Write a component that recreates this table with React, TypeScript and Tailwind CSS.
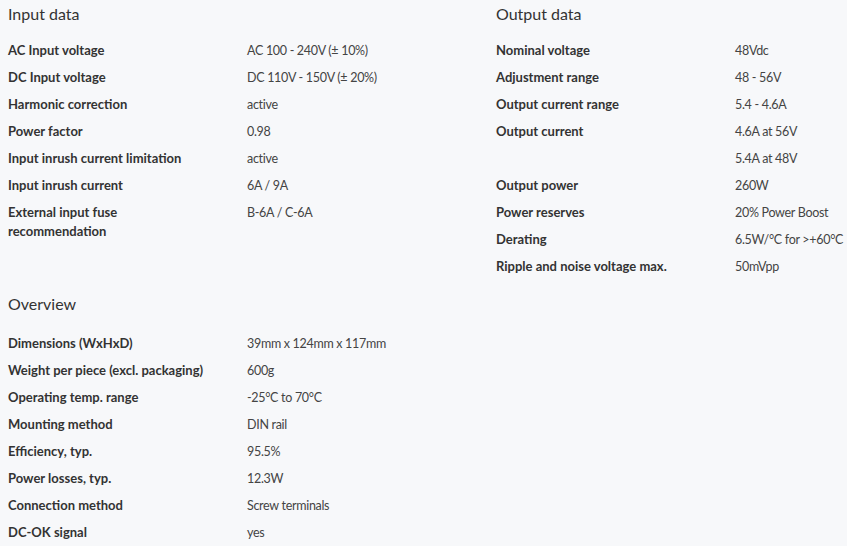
const INPUT_DATA = [
  { label: 'AC Input voltage', value: 'AC 100 - 240V (± 10%)' },
  { label: 'DC Input voltage', value: 'DC 110V - 150V (± 20%)' },
  { label: 'Harmonic correction', value: 'active' },
  { label: 'Power factor', value: '0.98' },
  { label: 'Input inrush current limitation', value: 'active' },
  { label: 'Input inrush current', value: '6A / 9A' },
  { label: 'External input fuse recommendation', value: 'B-6A / C-6A' },
]

const OUTPUT_DATA = [
  { label: 'Nominal voltage', value: '48Vdc' },
  { label: 'Adjustment range', value: '48 - 56V' },
  { label: 'Output current range', value: '5.4 - 4.6A' },
  { label: 'Output current', value: '4.6A at 56V' },
  { label: '', value: '5.4A at 48V' },
  { label: 'Output power', value: '260W' },
  { label: 'Power reserves', value: '20% Power Boost' },
  { label: 'Derating', value: '6.5W/°C for >+60°C' },
  { label: 'Ripple and noise voltage max.', value: '50mVpp' },
]

const OVERVIEW = [
  { label: 'Dimensions (WxHxD)', value: '39mm x 124mm x 117mm' },
  { label: 'Weight per piece (excl. packaging)', value: '600g' },
  { label: 'Operating temp. range', value: '-25°C to 70°C' },
  { label: 'Mounting method', value: 'DIN rail' },
  { label: 'Efficiency, typ.', value: '95.5%' },
  { label: 'Power losses, typ.', value: '12.3W' },
  { label: 'Connection method', value: 'Screw terminals' },
  { label: 'DC-OK signal', value: 'yes' },
]

type Row = { label: string; value: string }

function SpecTable({ title, rows, gap }: { title: string; rows: Row[]; gap: string }) {
  return (
    <div className="w-[488px] shrink-0">
      <h3 className={`text-[16px] leading-[20px] font-normal text-[#333] pt-[4px] ${gap}`}>{title}</h3>
      <div>
        {rows.map((r, i) => (
          <div key={i} className="flex leading-[19px] py-[4px]">
            <div className="w-[239px] shrink-0 pr-[34px] text-[13px] font-bold text-[#333]">{r.label}</div>
            <div className="text-[12.5px] tracking-[-0.3px] text-[#444] whitespace-nowrap">{r.value}</div>
          </div>
        ))}
      </div>
    </div>
  )
}

export default function App() {
  return (
    <div
      className="w-[847px] h-[546px] overflow-hidden bg-[#f7f8fa] px-[8px]"
      style={{ fontFamily: 'Lato, "Open Sans", sans-serif' }}
    >
      <div className="flex">
        <SpecTable title="Input data" rows={INPUT_DATA} gap="mb-[13px]" />
        <SpecTable title="Output data" rows={OUTPUT_DATA} gap="mb-[13px]" />
      </div>
      <div className="mt-[10px]">
        <SpecTable title="Overview" rows={OVERVIEW} gap="mb-[16px]" />
      </div>
    </div>
  )
}
